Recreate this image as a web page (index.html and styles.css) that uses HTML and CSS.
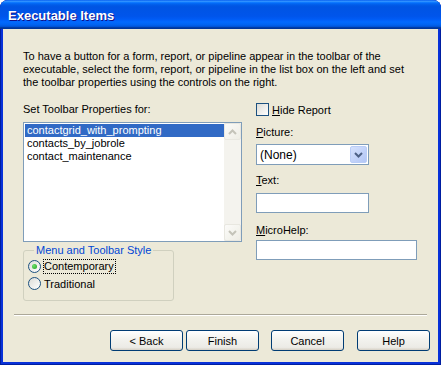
FILE: index.html
```html
<!DOCTYPE html>
<html lang="en">

<head>
    <meta charset="UTF-8">
    <title>Executable Items</title>
    <link rel="stylesheet" href="styles.css">
</head>

<body>
    <div class="window">
        <div class="titlebar">Executable Items</div>
        <div class="client">
            <p class="intro">To have a button for a form, report, or pipeline appear in the toolbar of the executable, select the form, report, or pipeline in the list box on the left and set the toolbar properties using the controls on the right.</p>
            <div class="main">
                <div class="leftCol">
                    <div class="label">Set Toolbar Properties for:</div>
                    <div class="listBox">
                        <div class="items">
                            <div class="item selected">contactgrid_with_prompting</div>
                            <div class="item">contacts_by_jobrole</div>
                            <div class="item">contact_maintenance</div>
                        </div>
                        <div class="scrollbar">
                            <div class="scrollBtn">
                                <svg width="9" height="6" viewBox="0 0 9 6"><path d="M1 5 L4.5 1.5 L8 5" fill="none" stroke="#c4c3b9" stroke-width="2"/></svg>
                            </div>
                            <div class="track"></div>
                            <div class="scrollBtn">
                                <svg width="9" height="6" viewBox="0 0 9 6"><path d="M1 1 L4.5 4.5 L8 1" fill="none" stroke="#c4c3b9" stroke-width="2"/></svg>
                            </div>
                        </div>
                    </div>
                    <fieldset class="group">
                        <legend>Menu and Toolbar Style</legend>
                        <div class="radioRow">
                            <span class="radio checked"></span>
                            <span class="focus">Contemporary</span>
                        </div>
                        <div class="radioRow">
                            <span class="radio"></span>
                            <span>Traditional</span>
                        </div>
                    </fieldset>
                </div>
                <div class="rightCol">
                    <div class="checkRow">
                        <span class="checkbox"></span>
                        <span><u>H</u>ide Report</span>
                    </div>
                    <div class="label pictureLabel"><u>P</u>icture:</div>
                    <div class="combo">
                        <span class="comboText">(None)</span>
                        <span class="dropBtn">
                            <svg width="9" height="6" viewBox="0 0 9 6"><path d="M1 1 L4.5 4.5 L8 1" fill="none" stroke="#4d6185" stroke-width="2"/></svg>
                        </span>
                    </div>
                    <div class="label textLabel"><u>T</u>ext:</div>
                    <div class="textBox"></div>
                    <div class="label helpLabel"><u>M</u>icroHelp:</div>
                    <div class="textBox wide"></div>
                </div>
            </div>
            <div class="separator"></div>
            <div class="buttons">
                <button class="btn">&lt; Back</button>
                <button class="btn finish">Finish</button>
                <button class="btn cancel">Cancel</button>
                <button class="btn help">Help</button>
            </div>
        </div>
    </div>
</body>

</html>
```

FILE: styles.css
```css
* {
    margin: 0;
    padding: 0;
    box-sizing: border-box;
}

body {
    font-family: "Liberation Sans", Arial, sans-serif;
    font-size: 11px;
    color: #000;
    background: #fff;
}

.window {
    width: 441px;
    height: 365px;
    display: flex;
    flex-direction: column;
    background: #0831d9;
    border-radius: 8px 8px 0 0;
    padding: 0 3px 3px;
    box-shadow: inset 1px 0 #001ea0, inset -1px 0 #001ea0, inset 0 -1px #001ea0;
}

.titlebar {
    height: 29px;
    margin: 0 -3px;
    padding: 2px 0 0 8px;
    line-height: 27px;
    font-size: 13px;
    font-weight: bold;
    color: #fff;
    text-shadow: 1px 1px #0f1089;
    border-radius: 8px 8px 0 0;
    background: linear-gradient(180deg, #0058ee 0%, #3593ff 4%, #288eff 6%, #127dff 8%, #036ffc 10%, #0262ee 14%, #0057e5 20%, #0054e3 24%, #0055eb 56%, #005bf5 66%, #026afe 76%, #0062ef 86%, #0052d6 92%, #0040ab 94%, #003092 100%);
}

.client {
    flex: 1;
    background: #ece9d8;
    display: flex;
    flex-direction: column;
}

.intro {
    padding: 21px 20px 0;
    line-height: 13px;
}

.label {
    line-height: 13px;
    height: 13px;
}

.main {
    display: flex;
    margin-top: 14px;
    padding-left: 20px;
}

.leftCol {
    width: 219px;
    display: flex;
    flex-direction: column;
}

.listBox {
    margin-top: 6px;
    height: 120px;
    border: 1px solid #7f9db9;
    background: #fff;
    display: flex;
}

.items {
    flex: 1;
    padding: 1px 0 0 1px;
}

.item {
    height: 13px;
    line-height: 13px;
    padding-left: 2px;
}

.item.selected {
    background: #316ac5;
    color: #fff;
}

.scrollbar {
    width: 17px;
    display: flex;
    flex-direction: column;
    background: #f4f3ee;
}

.track {
    flex: 1;
}

.scrollBtn {
    height: 17px;
    display: flex;
    align-items: center;
    justify-content: center;
    border: 1px solid #e8e7e0;
    border-radius: 2px;
    background: linear-gradient(135deg, #fbfbf9, #eeede5);
}

.group {
    margin-top: 2px;
    width: 151px;
    height: 57px;
    border: 1px solid #d0d0bf;
    border-radius: 3px;
    padding: 1px 4px 0;
}

.group legend {
    margin-left: 6px;
    padding: 0 2px;
    color: #0046d5;
    line-height: 13px;
}

.radioRow {
    display: flex;
    align-items: center;
    height: 17px;
}

.radio {
    width: 13px;
    height: 13px;
    border: 1px solid #1c5180;
    border-radius: 50%;
    background: linear-gradient(135deg, #dcdcd7, #fff);
    margin-right: 3px;
    display: flex;
    align-items: center;
    justify-content: center;
}

.radio.checked::after {
    content: '';
    width: 5px;
    height: 5px;
    border-radius: 50%;
    background: radial-gradient(circle at 35% 35%, #6de06a, #21a121);
}

.focus {
    outline: 1px dotted #000;
    line-height: 13px;
    padding-right: 1px;
}

.rightCol {
    margin-left: 14px;
    display: flex;
    flex-direction: column;
}

.checkRow {
    display: flex;
    align-items: center;
    height: 13px;
}

.checkbox {
    width: 13px;
    height: 13px;
    border: 1px solid #1c5180;
    background: linear-gradient(135deg, #dcdcd7, #fff);
    margin-right: 3px;
}

.pictureLabel {
    margin-top: 10px;
}

.combo {
    margin-top: 5px;
    width: 113px;
    height: 21px;
    border: 1px solid #7f9db9;
    background: #fff;
    display: flex;
    align-items: center;
    padding: 1px;
}

.comboText {
    flex: 1;
    padding-left: 2px;
    font-size: 12px;
}

.dropBtn {
    width: 17px;
    height: 17px;
    border: 1px solid #bacdf7;
    border-radius: 2px;
    background: linear-gradient(135deg, #d5e1fd, #b2c6f5);
    display: flex;
    align-items: center;
    justify-content: center;
}

.textLabel {
    margin-top: 9px;
}

.textBox {
    margin-top: 6px;
    width: 113px;
    height: 20px;
    border: 1px solid #7f9db9;
    background: #fff;
}

.helpLabel {
    margin-top: 11px;
}

.textBox.wide {
    margin-top: 3px;
    width: 161px;
}

.separator {
    margin: auto 11px 0;
    border-top: 1px solid #aca899;
    border-bottom: 1px solid #fff;
}

.buttons {
    display: flex;
    justify-content: flex-end;
    padding: 14px 8px 11px 0;
}

.btn {
    width: 73px;
    height: 21px;
    font-family: "Liberation Sans", Arial, sans-serif;
    font-size: 11px;
    color: #000;
    border: 1px solid #003c74;
    border-radius: 3px;
    background: linear-gradient(180deg, #fff 0%, #f3f3ef 40%, #ecebe6 86%, #d6d0c5 100%);
}

.finish {
    margin-left: 3px;
}

.cancel {
    margin-left: 12px;
}

.help {
    margin-left: 13px;
}
```
